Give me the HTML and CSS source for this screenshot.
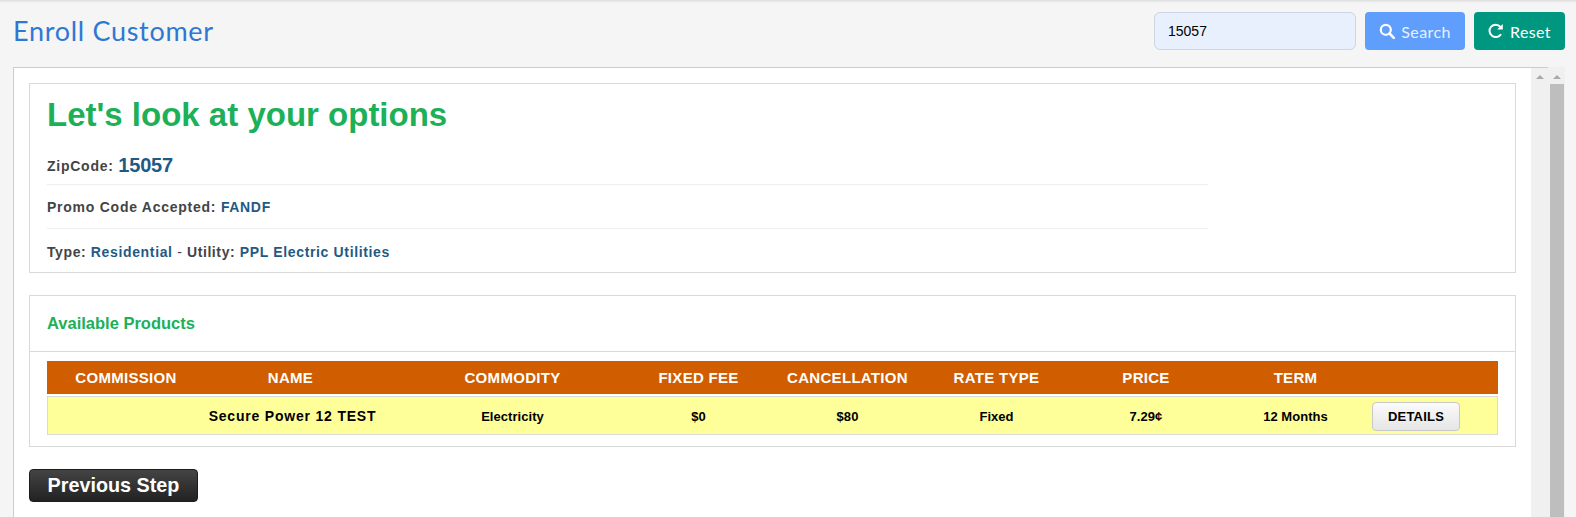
FILE: index.html
```html
<!DOCTYPE html>
<html lang="en">
<head>
<meta charset="utf-8">
<title>Enroll Customer</title>
<link rel="stylesheet" href="styles.css">
</head>
<body>
<header class="topbar">
  <h1 class="page-title">Enroll Customer</h1>
  <form class="search-form">
    <input class="search-input" type="text" value="15057">
    <button class="btn btn-search" type="button">
      <svg class="btn-icon" viewBox="0 0 16 16"><circle cx="6.8" cy="6.8" r="5" fill="none" stroke="#fff" stroke-width="2.2"/><path d="M10.5 10.5 14.8 14.8" stroke="#fff" stroke-width="2.6" stroke-linecap="round"/></svg>
      Search
    </button>
    <button class="btn btn-reset" type="button">
      <svg class="btn-icon" viewBox="0 0 16 16"><path d="M13 11.2A6.2 6.2 0 1 1 12.4 3.8" fill="none" stroke="#fff" stroke-width="2"/><path d="M14.8 1V6.6H9.2Z" fill="#fff"/></svg>
      Reset
    </button>
  </form>
</header>
<div class="frame">
  <main class="content">
    <section class="card card-summary">
      <h2 class="headline">Let's look at your options</h2>
      <div class="info info-zip"><span class="label">ZipCode:</span> <span class="zip">15057</span></div>
      <div class="info info-promo"><span class="label">Promo Code Accepted:</span> <span class="value">FANDF</span></div>
      <div class="info info-type"><span class="label">Type:</span> <span class="value">Residential</span> <span class="dash">-</span> <span class="label">Utility:</span> <span class="value">PPL Electric Utilities</span></div>
    </section>
    <section class="card card-products">
      <h3 class="card-heading">Available Products</h3>
      <div class="card-body">
        <div class="grid grid-head">
          <div class="cell-first">COMMISSION</div><div>NAME</div><div>COMMODITY</div><div>FIXED FEE</div><div>CANCELLATION</div><div>RATE TYPE</div><div>PRICE</div><div>TERM</div><div></div>
        </div>
        <div class="grid grid-row">
          <div class="cell-first"></div><div class="product-name">Secure Power 12 TEST</div><div>Electricity</div><div>$0</div><div>$80</div><div>Fixed</div><div>7.29¢</div><div>12 Months</div>
          <div class="cell-action"><button class="btn-details" type="button">DETAILS</button></div>
        </div>
      </div>
    </section>
    <button class="btn-prev" type="button">Previous Step</button>
  </main>
  <div class="scrollbar"><span class="arrow"></span></div>
  <div class="scrollbar scrollbar-outer"><span class="arrow"></span><span class="thumb"></span></div>
</div>
</body>
</html>
```
FILE: styles.css
```css
* { box-sizing: border-box; }
html, body { margin: 0; height: 517px; overflow: hidden; }
body {
  background: #f5f5f5;
  font-family: "Liberation Sans", Arial, sans-serif;
  color: #444;
  display: flex;
  flex-direction: column;
}
.topbar {
  height: 67px;
  flex: none;
  display: flex;
  justify-content: space-between;
  align-items: flex-start;
  padding: 12px 11px 0 13px;
  background: linear-gradient(#dcdcdc 0, #f0f0f0 2px, #f5f5f5 4px);
}
.page-title {
  margin: 0;
  font-family: "Lato", sans-serif;
  font-weight: 400;
  font-size: 27px;
  line-height: 38px;
  color: #2f78d2;
  letter-spacing: .7px;
}
.search-form { display: flex; gap: 9px; }
.search-input {
  width: 202px;
  height: 38px;
  border: 1px solid #ced4e0;
  border-radius: 6px;
  background: #e8f0fe;
  padding: 0 13px;
  font: 14px "Liberation Sans", Arial, sans-serif;
  color: #000;
  outline: none;
}
.btn {
  height: 38px;
  border: 0;
  border-radius: 4px;
  color: #fff;
  font: 400 16px "Lato", sans-serif;
  letter-spacing: .4px;
  display: flex;
  align-items: center;
  justify-content: center;
  gap: 6px;
  padding: 0;
}
.btn-search { width: 100px; background: #5f9efc; color: #e6f0ff; }
.btn-reset { width: 91px; background: #009781; }
.btn-icon { width: 16px; height: 16px; }
.frame {
  flex: 1;
  min-height: 0;
  margin: 0 11px 0 13px;
  display: flex;
  background: #fff;
  border-left: 1px solid #ccc;
  overflow: hidden;
}
.content {
  flex: 1;
  min-width: 0;
  border-top: 1px solid #ccc;
  padding: 15px 15px 0 15px;
}
.card {
  background: #fff;
  border: 1px solid #d9d9d9;
}
.card-summary {
  height: 190px;
  padding: 0 17px;
  margin-bottom: 22px;
}
.headline {
  margin: 0;
  padding-top: 10px;
  font-size: 33px;
  line-height: 42px;
  font-weight: 700;
  color: #1cb058;
}
.info {
  width: 1161px;
  font-size: 14px;
  font-weight: 700;
  letter-spacing: .75px;
  color: #444;
}
.info-zip { height: 49px; padding-top: 17px; line-height: 24px; border-bottom: 1px solid #eee; }
.info-zip .label { vertical-align: 1px; }
.info-promo { height: 44px; line-height: 44px; border-bottom: 1px solid #eee; }
.info-type { height: 43px; line-height: 46px; letter-spacing: .6px; }
.zip { font-size: 20px; color: #1f5a85; letter-spacing: -.2px; }
.value { color: #1f5a85; letter-spacing: .65px; }
.dash { font-weight: 400; }
.card-products { height: 152px; margin-bottom: 22px; }
.card-heading {
  margin: 0;
  height: 56px;
  line-height: 54px;
  padding-left: 17px;
  font-size: 16.5px;
  font-weight: 700;
  color: #1cb058;
  border-bottom: 1px solid #d9d9d9;
}
.card-body { padding: 9px 17px 0; }
.grid {
  display: grid;
  text-align: center;
  align-items: center;
}
.grid-head {
  grid-template-columns: 133px 221px 223px 149px 149px 149px 150px 149px 1fr;
  height: 33px;
  background: #d05e00;
  color: #fff;
  font-size: 15px;
  font-weight: 700;
  letter-spacing: .3px;
  margin-bottom: 2px;
}
.cell-first { padding-left: 25px; }
.grid-row {
  grid-template-columns: 132px 221px 223px 149px 149px 149px 150px 149px 1fr;
  height: 39px;
  padding-top: 1px;
  background: #ffff99;
  border: 1px solid #d9d9d9;
  color: #000;
  font-size: 13px;
  font-weight: 700;
  letter-spacing: .05px;
}
.product-name { font-size: 14px; letter-spacing: .8px; padding-left: 4px; }
.cell-action { text-align: left; padding-left: 2px; display: flex; }
.btn-details {
  width: 88px;
  height: 29px;
  border: 1px solid #c8c8c8;
  border-radius: 4px;
  background: linear-gradient(#fafafa, #e6e6e6);
  font: 700 13px "Liberation Sans", Arial, sans-serif;
  letter-spacing: .2px;
  color: #000;
  padding: 0;
}
.btn-prev {
  display: block;
  width: 169px;
  height: 33px;
  border: 1px solid #1c1c1c;
  border-radius: 4px;
  background: linear-gradient(#444, #222);
  color: #fff;
  font: 700 19.8px "Liberation Sans", Arial, sans-serif;
  padding: 0;
}
.scrollbar {
  width: 17px;
  flex: none;
  background: #f0f0f0;
  border-top: 1px solid #ccc;
  padding-top: 7px;
}
.scrollbar-outer { border-top: 0; padding-top: 8px; }
.arrow {
  display: block;
  width: 0;
  height: 0;
  margin: 0 auto;
  border-left: 4px solid transparent;
  border-right: 4px solid transparent;
  border-bottom: 4px solid #a9a9a9;
}
.thumb {
  display: block;
  width: 14px;
  height: 440px;
  margin: 5px auto 0;
  background: #bebebe;
}
```
